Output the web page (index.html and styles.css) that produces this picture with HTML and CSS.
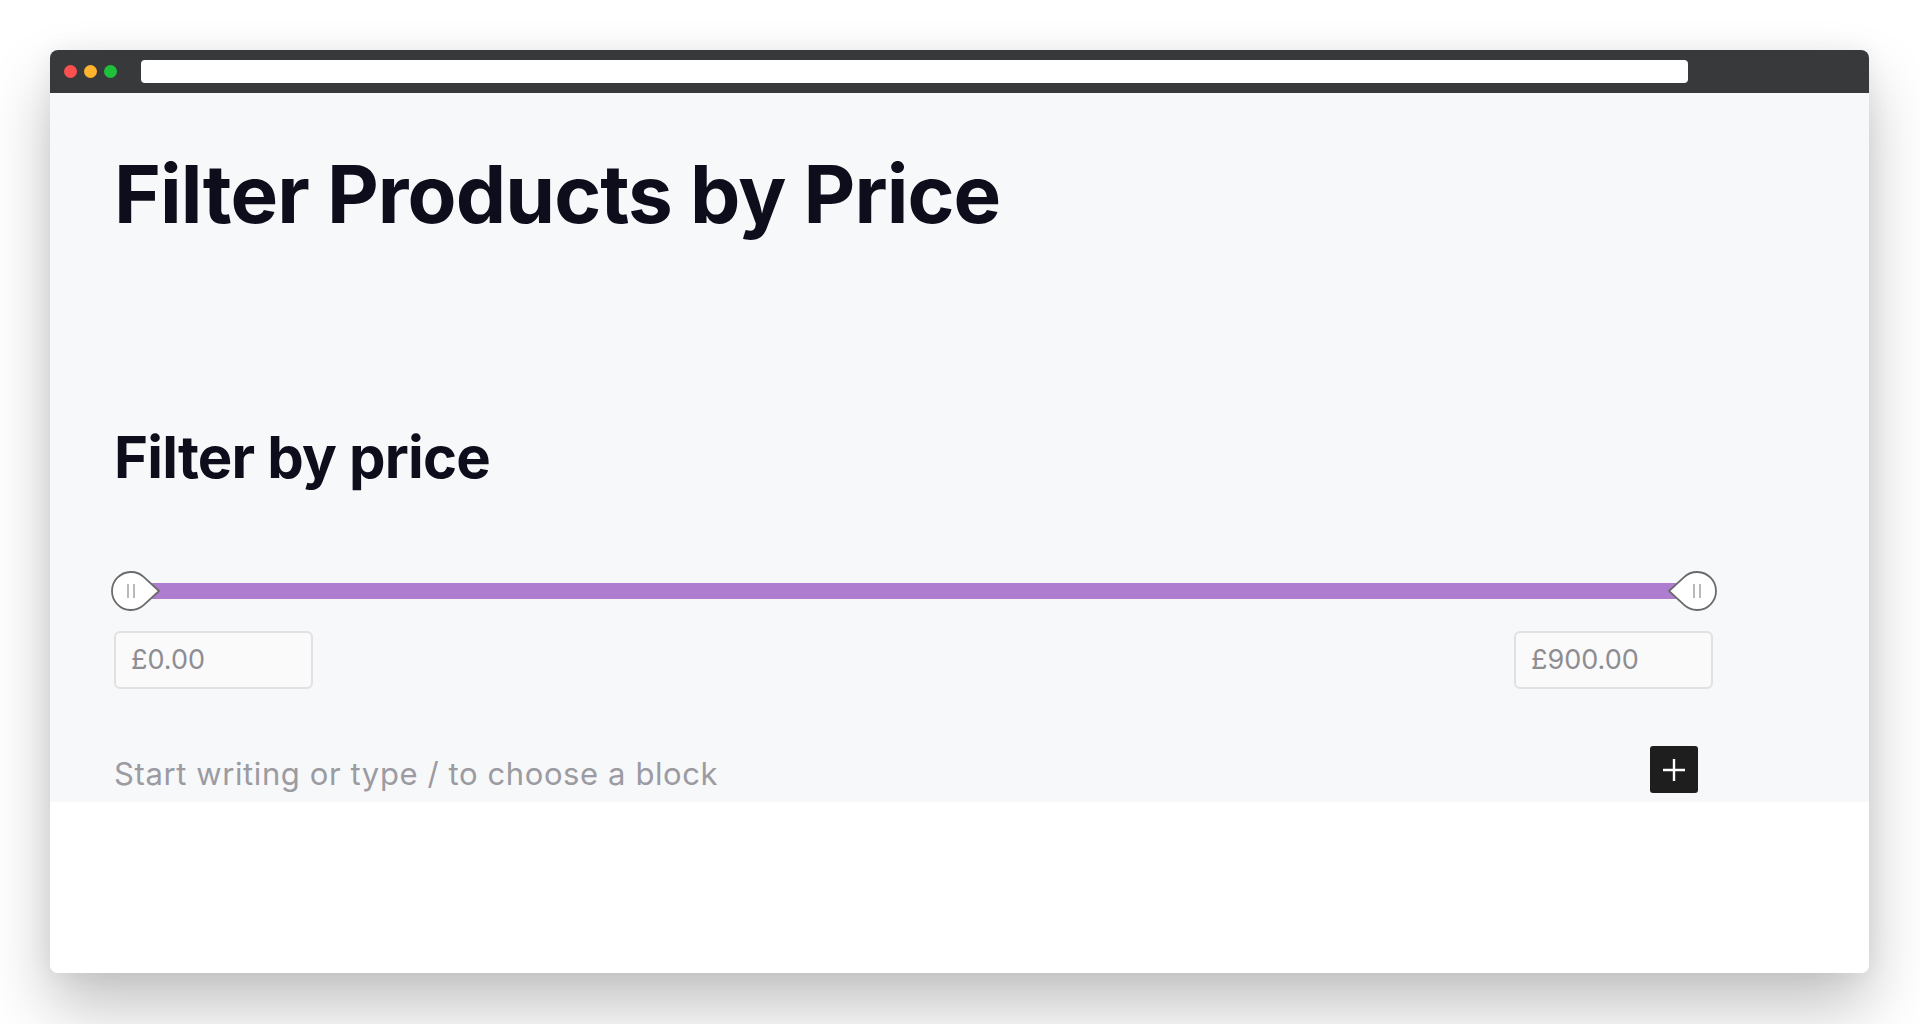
FILE: index.html
```html
<!DOCTYPE html>
<html lang="en">
<head>
<meta charset="utf-8">
<title>Filter Products by Price</title>
<link rel="stylesheet" href="styles.css">
</head>
<body>
<div class="window">
  <div class="topbar">
    <span class="dot red"></span>
    <span class="dot yellow"></span>
    <span class="dot green"></span>
    <div class="urlbar"></div>
  </div>
  <div class="content">
    <h1 class="title">Filter Products by Price</h1>
    <h2 class="subtitle">Filter by price</h2>
    <div class="slider">
      <div class="track"></div>
      <svg class="handle handle-left" width="50" height="40" viewBox="0 0 50 40">
        <path d="M48 20 L32.9 6.05 A19 19 0 1 0 32.9 33.95 Z" fill="#fff" stroke="#6b6b6b" stroke-width="1.8" stroke-linejoin="round"/>
        <line x1="17" y1="13" x2="17" y2="27" stroke="#a8a8a8" stroke-width="1.6"/>
        <line x1="23" y1="13" x2="23" y2="27" stroke="#a8a8a8" stroke-width="1.6"/>
      </svg>
      <svg class="handle handle-right" width="50" height="40" viewBox="0 0 50 40">
        <path d="M2 20 L17.1 6.05 A19 19 0 1 1 17.1 33.95 Z" fill="#fff" stroke="#6b6b6b" stroke-width="1.8" stroke-linejoin="round"/>
        <line x1="27" y1="13" x2="27" y2="27" stroke="#a8a8a8" stroke-width="1.6"/>
        <line x1="33" y1="13" x2="33" y2="27" stroke="#a8a8a8" stroke-width="1.6"/>
      </svg>
    </div>
    <div class="price-inputs">
      <div class="price-box">£0.00</div>
      <div class="price-box">£900.00</div>
    </div>
    <div class="block-row">
      <div class="placeholder">Start writing or type / to choose a block</div>
      <button class="add-btn" aria-label="Add block">
        <svg width="24" height="24" viewBox="0 0 24 24"><path d="M12 1 V23 M1 12 H23" stroke="#fff" stroke-width="2.4" fill="none"/></svg>
      </button>
    </div>
  </div>
  <div class="footer-space"></div>
</div>
</body>
</html>
```
FILE: styles.css
```css
* { box-sizing: border-box; }
html, body { margin: 0; padding: 0; background: #ffffff; }
body {
  font-family: Inter, "Noto Sans", "Liberation Sans", sans-serif;
  padding: 50px 0 0 50px;
  height: 1024px;
  overflow: hidden;
}
.window {
  width: 1819px;
  border-radius: 8px;
  overflow: hidden;
  background: #ffffff;
  box-shadow: 0 34px 64px rgba(0, 0, 0, 0.24), 0 0 24px rgba(0, 0, 0, 0.06);
}
.topbar {
  height: 43px;
  background: #38393b;
  display: flex;
  align-items: center;
  padding-left: 14px;
}
.dot {
  width: 13px;
  height: 13px;
  border-radius: 50%;
  margin-right: 7px;
  flex: none;
}
.red { background: #fd4f4d; }
.yellow { background: #feb42c; }
.green { background: #1fc13b; }
.urlbar {
  margin-left: 17px;
  width: 1547px;
  height: 23px;
  background: #ffffff;
  border-radius: 4px;
}
.content {
  background: #f7f8fa;
  height: 709px;
  padding: 53px 0 0 64px;
}
.title {
  margin: 0;
  font-size: 80px;
  line-height: 96px;
  font-weight: 700;
  color: #0e0d1b;
  letter-spacing: -0.9px;
}
.subtitle {
  margin: 180px 0 0 0;
  font-size: 58px;
  line-height: 70px;
  font-weight: 700;
  color: #0e0d1b;
  letter-spacing: -0.8px;
}
.slider {
  position: relative;
  width: 1606px;
  height: 40px;
  margin: 79px 0 0 -3px;
}
.track {
  position: absolute;
  left: 20px;
  right: 20px;
  top: 12px;
  height: 16px;
  background: #ae7dd0;
}
.handle {
  position: absolute;
  top: 0;
}
.handle-left { left: 0; }
.handle-right { right: 0; }
.price-inputs {
  display: flex;
  justify-content: space-between;
  width: 1599px;
  margin-top: 20px;
}
.price-box {
  width: 199px;
  height: 58px;
  border: 2px solid #e1e1e3;
  border-radius: 6px;
  background: #fafafb;
  color: #8d8d92;
  font-size: 27px;
  line-height: 54px;
  padding-left: 15px;
}
.block-row {
  display: flex;
  justify-content: space-between;
  align-items: flex-start;
  width: 1584px;
  margin-top: 57px;
}
.placeholder {
  font-size: 31px;
  line-height: 36px;
  color: #9b9ba1;
  letter-spacing: 0.6px;
  padding-top: 10px;
}
.add-btn {
  width: 48px;
  height: 47px;
  border: none;
  border-radius: 3px;
  background: #1e1e1e;
  display: flex;
  align-items: center;
  justify-content: center;
  padding: 0;
}
.footer-space {
  height: 171px;
  background: #ffffff;
}
```
